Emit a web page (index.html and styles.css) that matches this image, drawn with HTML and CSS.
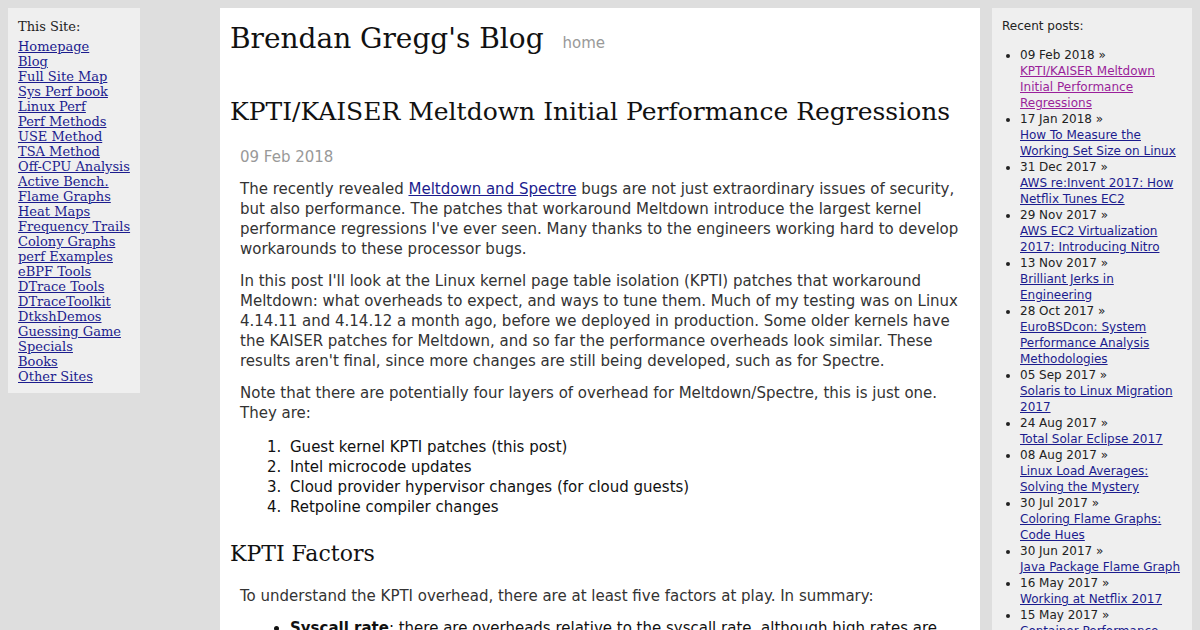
FILE: index.html
```html
<!DOCTYPE html>
<html>
<head>
<meta charset="utf-8">
<title>KPTI/KAISER Meltdown Initial Performance Regressions</title>
<link rel="stylesheet" href="styles.css">
</head>
<body>
<div class="page">
  <nav class="site-nav">
    <div class="nav-title">This Site:</div>
    <ul class="nav-links">
      <li><a href="#">Homepage</a></li>
      <li><a href="#">Blog</a></li>
      <li><a href="#">Full Site Map</a></li>
      <li><a href="#">Sys Perf book</a></li>
      <li><a href="#">Linux Perf</a></li>
      <li><a href="#">Perf Methods</a></li>
      <li><a href="#">USE Method</a></li>
      <li><a href="#">TSA Method</a></li>
      <li><a href="#">Off-CPU Analysis</a></li>
      <li><a href="#">Active Bench.</a></li>
      <li><a href="#">Flame Graphs</a></li>
      <li><a href="#">Heat Maps</a></li>
      <li><a href="#">Frequency Trails</a></li>
      <li><a href="#">Colony Graphs</a></li>
      <li><a href="#">perf Examples</a></li>
      <li><a href="#">eBPF Tools</a></li>
      <li><a href="#">DTrace Tools</a></li>
      <li><a href="#">DTraceToolkit</a></li>
      <li><a href="#">DtkshDemos</a></li>
      <li><a href="#">Guessing Game</a></li>
      <li><a href="#">Specials</a></li>
      <li><a href="#">Books</a></li>
      <li><a href="#">Other Sites</a></li>
    </ul>
  </nav>

  <main class="content">
    <header class="blog-header">
      <span class="blog-title">Brendan Gregg's Blog</span>
      <a class="home-link" href="#">home</a>
    </header>

    <h1 class="post-title">KPTI/KAISER Meltdown Initial Performance Regressions</h1>

    <div class="post">
      <div class="post-date">09 Feb 2018</div>

      <p>The recently revealed <a href="#">Meltdown and Spectre</a> bugs are not just extraordinary issues of security, but also performance. The patches that workaround Meltdown introduce the largest kernel performance regressions I've ever seen. Many thanks to the engineers working hard to develop workarounds to these processor bugs.</p>

      <p>In this post I'll look at the Linux kernel page table isolation (KPTI) patches that workaround Meltdown: what overheads to expect, and ways to tune them. Much of my testing was on Linux 4.14.11 and 4.14.12 a month ago, before we deployed in production. Some older kernels have the KAISER patches for Meltdown, and so far the performance overheads look similar. These results aren't final, since more changes are still being developed, such as for Spectre.</p>

      <p>Note that there are potentially four layers of overhead for Meltdown/Spectre, this is just one. They are:</p>

      <ol class="layers">
        <li>Guest kernel KPTI patches (this post)</li>
        <li>Intel microcode updates</li>
        <li>Cloud provider hypervisor changes (for cloud guests)</li>
        <li>Retpoline compiler changes</li>
      </ol>
    </div>

    <h2 class="section-title">KPTI Factors</h2>

    <div class="post">
      <p class="lead">To understand the KPTI overhead, there are at least five factors at play. In summary:</p>
      <ul class="factors">
        <li><b>Syscall rate</b>: there are overheads relative to the syscall rate, although high rates are needed for this to be noticable. At 50k syscalls/sec per CPU the overhead may be 2%, and climbs as the syscall rate increases.</li>
      </ul>
    </div>
  </main>

  <aside class="recent">
    <div class="recent-title">Recent posts:</div>
    <ul class="recent-list">
      <li>09 Feb 2018 &raquo;<br><a class="visited" href="#">KPTI/KAISER Meltdown Initial Performance Regressions</a></li>
      <li>17 Jan 2018 &raquo;<br><a href="#">How To Measure the Working Set Size on Linux</a></li>
      <li>31 Dec 2017 &raquo;<br><a href="#">AWS re:Invent 2017: How Netflix Tunes EC2</a></li>
      <li>29 Nov 2017 &raquo;<br><a href="#">AWS EC2 Virtualization 2017: Introducing Nitro</a></li>
      <li>13 Nov 2017 &raquo;<br><a href="#">Brilliant Jerks in Engineering</a></li>
      <li>28 Oct 2017 &raquo;<br><a href="#">EuroBSDcon: System Performance Analysis Methodologies</a></li>
      <li>05 Sep 2017 &raquo;<br><a href="#">Solaris to Linux Migration 2017</a></li>
      <li>24 Aug 2017 &raquo;<br><a href="#">Total Solar Eclipse 2017</a></li>
      <li>08 Aug 2017 &raquo;<br><a href="#">Linux Load Averages: Solving the Mystery</a></li>
      <li>30 Jul 2017 &raquo;<br><a href="#">Coloring Flame Graphs: Code Hues</a></li>
      <li>30 Jun 2017 &raquo;<br><a href="#">Java Package Flame Graph</a></li>
      <li>16 May 2017 &raquo;<br><a href="#">Working at Netflix 2017</a></li>
      <li>15 May 2017 &raquo;<br><a href="#">Container Performance Analysis at DockerCon 2017</a></li>
    </ul>
  </aside>
</div>
</body>
</html>
```

FILE: styles.css
```css
html, body {
  margin: 0;
  padding: 0;
}
body {
  background: #dedede;
  padding: 8px;
  font-family: "DejaVu Sans", sans-serif;
}
a {
  color: #1c1c8e;
}
.page {
  display: flex;
  align-items: flex-start;
}

/* left nav */
.site-nav {
  width: 122px;
  flex: none;
  background: #efefef;
  padding: 11px 0 9px 10px;
  font-family: "DejaVu Serif", serif;
  font-size: 13px;
  line-height: 15px;
  color: #222;
  white-space: nowrap;
}
.nav-title {
  margin-bottom: 5px;
}
.nav-links {
  list-style: none;
  margin: 0;
  padding: 0;
}

/* main content */
.content {
  width: 740px;
  flex: none;
  margin-left: 80px;
  background: #fff;
  padding: 15px 10px 10px;
  min-height: 700px;
}
.blog-header {
  display: flex;
  align-items: baseline;
  gap: 19px;
  height: 40px;
}
.blog-title {
  font-family: "DejaVu Serif", serif;
  font-size: 28px;
  line-height: 32px;
  color: #111;
}
.home-link {
  font-size: 15px;
  color: #999;
  text-decoration: none;
}
.post-title {
  font-family: "DejaVu Serif", serif;
  font-weight: normal;
  font-size: 25px;
  color: #111;
  margin: 33px 0 0;
  line-height: 32px;
  white-space: nowrap;
}
.post {
  padding: 0 10px;
  font-size: 15px;
  line-height: 20px;
  color: #333;
}
.post-date {
  color: #999;
  font-size: 15px;
  margin-top: 19px;
  margin-bottom: 12px;
}
.post p {
  margin: 12px 0;
}
.layers {
  margin: 14px 0 0;
  padding-left: 46px;
  color: #111;
}
.layers li {
  padding-left: 4px;
}
.section-title {
  font-family: "DejaVu Serif", serif;
  font-weight: normal;
  font-size: 22px;
  color: #111;
  margin: 23px 0 0;
  line-height: 28px;
}
.post p.lead {
  margin-top: 18px;
}
.factors {
  padding-left: 50px;
  margin: 12px 0;
  color: #111;
}

/* right sidebar */
.recent {
  width: 180px;
  flex: none;
  margin-left: 12px;
  background: #efefef;
  padding: 10px;
  font-size: 12px;
  line-height: 16px;
  color: #222;
  min-height: 700px;
}
.recent-title {
  margin-bottom: 13px;
}
.recent-list {
  margin: 0;
  padding-left: 18px;
}
.recent-list a.visited {
  color: #9a1f9a;
}
```
